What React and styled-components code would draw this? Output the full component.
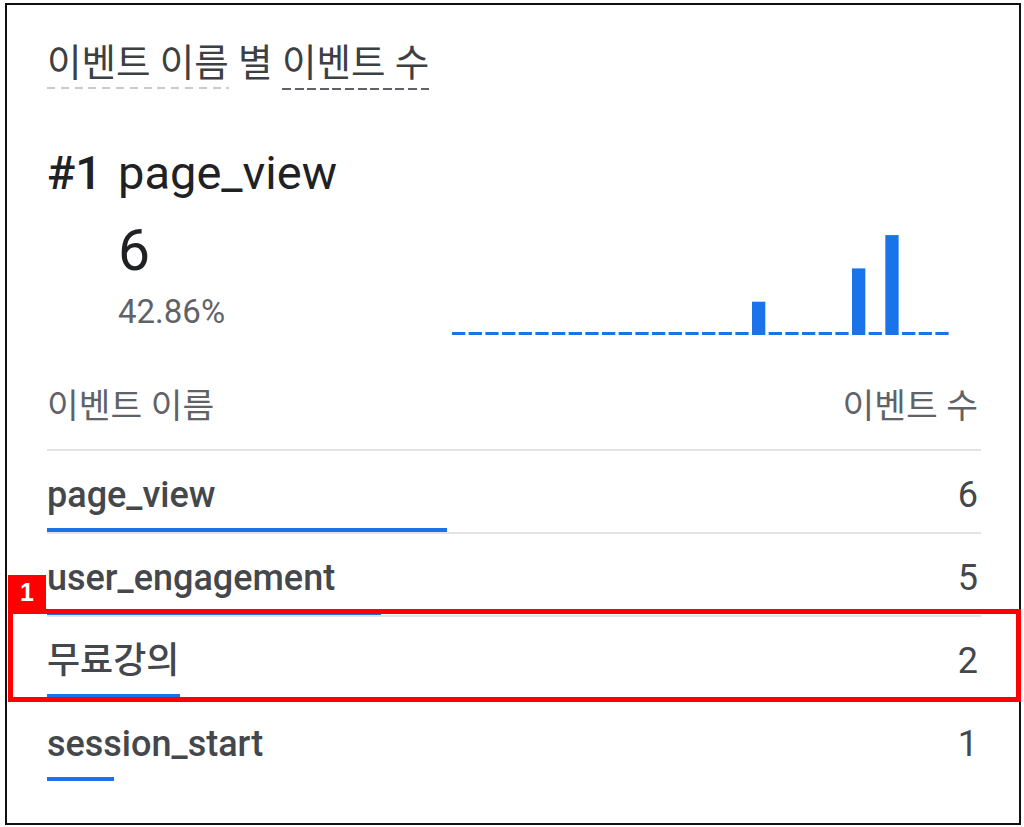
import React from "react";
import styled, { createGlobalStyle } from "styled-components";

const GlobalStyle = createGlobalStyle`
    html, body {
        margin: 0;
        padding: 0;
        background: #ffffff;
    }
    body {
        font-family: Roboto, "Noto Sans CJK KR", "Noto Sans", sans-serif;
    }
`;

const Card = styled.div`
    position: relative;
    box-sizing: border-box;
    width: 1016px;
    height: 822px;
    margin: 3px 0 0 5px;
    border: 2px solid #111111;
    padding: 36px 38px 0 40px;
    background: #ffffff;
`;

const Title = styled.div`
    font-size: 37.5px;
    line-height: 44px;
    color: #3c4043;
    white-space: nowrap;
`;

const Underlined = styled.span`
    display: inline-block;
    padding-bottom: ${(p) => (p.$strong ? "5px" : "4px")};
    background-image: repeating-linear-gradient(
        to right,
        ${(p) => (p.$strong ? "#5f6368" : "#c8cacd")} 0 ${(p) => (p.$strong ? "9px" : "8px")},
        transparent ${(p) => (p.$strong ? "9px" : "8px")} ${(p) => (p.$strong ? "12.6px" : "13.8px")}
    );
    background-repeat: no-repeat;
    background-size: 100% 2px;
    background-position: left bottom;
`;

const Headline = styled.div`
    display: flex;
    align-items: baseline;
    gap: 16px;
    margin-top: 56px;
    font-size: 47px;
    line-height: 54px;
    color: #202124;
`;

const Rank = styled.span`
    font-weight: 500;
`;

const Summary = styled.div`
    display: grid;
    grid-template-columns: 405px 500px;
    align-items: end;
    margin-top: 19px;
`;

const Metric = styled.div`
    display: flex;
    flex-direction: column;
    gap: 10px;
    padding-left: 71px;
`;

const BigValue = styled.div`
    font-size: 57px;
    line-height: 64px;
    color: #202124;
`;

const Percent = styled.div`
    font-size: 33px;
    line-height: 38px;
    color: #5f6368;
`;

const Chart = styled.svg`
    display: block;
    margin-bottom: -4px;
`;

const TableHead = styled.div`
    display: flex;
    justify-content: space-between;
    margin-top: 54px;
    padding: 0 3px 22px 0;
    font-size: 34.5px;
    line-height: 42px;
    color: #5f6368;
`;

const Row = styled.div`
    position: relative;
    border-top: 2px solid #e3e4e6;
    padding-top: 23px;
`;

const RowLine = styled.div`
    display: flex;
    justify-content: space-between;
    font-size: 36px;
    line-height: 42px;
    color: #44474b;
`;

const Label = styled.span`
    font-weight: 500;
`;

const Count = styled.span`
    padding-right: 3px;
`;

const Bar = styled.div`
    height: 4px;
    margin-top: 12px;
    width: ${(p) => p.$pct}%;
    background: #1a73e8;
`;

const Highlight = styled.div`
    position: absolute;
    z-index: 2;
    top: -8px;
    bottom: -4px;
    left: -39px;
    right: -40px;
    border: 5px solid #ff0000;
    pointer-events: none;
`;

const Badge = styled.div`
    position: absolute;
    top: -39px;
    left: -5px;
    width: 38px;
    height: 34px;
    background: #ff0000;
    color: #ffffff;
    font-family: "Liberation Sans", Arial, sans-serif;
    font-weight: 700;
    font-size: 25px;
    line-height: 34px;
    text-align: center;
`;

const SLOT = 500 / 30;
const UNIT = 33.3;
const series = Array.from({ length: 30 }, (_, i) =>
    i === 18 ? 1 : i === 24 ? 2 : i === 26 ? 3 : 0
);

const Sparkline = () => (
    <Chart width="500" height="101" viewBox="0 0 500 101">
        {series.map((v, i) =>
            v === 0 ? (
                <rect key={i} x={i * SLOT} y={98} width={13.3} height={3} fill="#1a73e8" />
            ) : (
                <rect key={i} x={i * SLOT} y={101 - v * UNIT} width={13.3} height={v * UNIT} fill="#1a73e8" />
            )
        )}
    </Chart>
);

const rows = [
    { name: "page_view", count: 6 },
    { name: "user_engagement", count: 5 },
    { name: "무료강의", count: 2, mark: "1" },
    { name: "session_start", count: 1 },
];

const total = rows.reduce((s, r) => s + r.count, 0);

const App = () => {
    return (
        <>
            <GlobalStyle />
            <Card>
                <Title>
                    <Underlined>이벤트 이름</Underlined> 별 <Underlined $strong>이벤트 수</Underlined>
                </Title>
                <Headline>
                    <Rank>#1</Rank>
                    <span>page_view</span>
                </Headline>
                <Summary>
                    <Metric>
                        <BigValue>6</BigValue>
                        <Percent>42.86%</Percent>
                    </Metric>
                    <Sparkline />
                </Summary>
                <TableHead>
                    <span>이벤트 이름</span>
                    <span>이벤트 수</span>
                </TableHead>
                {rows.map((r) => (
                    <Row key={r.name}>
                        <RowLine>
                            <Label>{r.name}</Label>
                            <Count>{r.count}</Count>
                        </RowLine>
                        <Bar $pct={(r.count / total) * 100} />
                        {r.mark && (
                            <Highlight>
                                <Badge>{r.mark}</Badge>
                            </Highlight>
                        )}
                    </Row>
                ))}
            </Card>
        </>
    );
};

export default App;
